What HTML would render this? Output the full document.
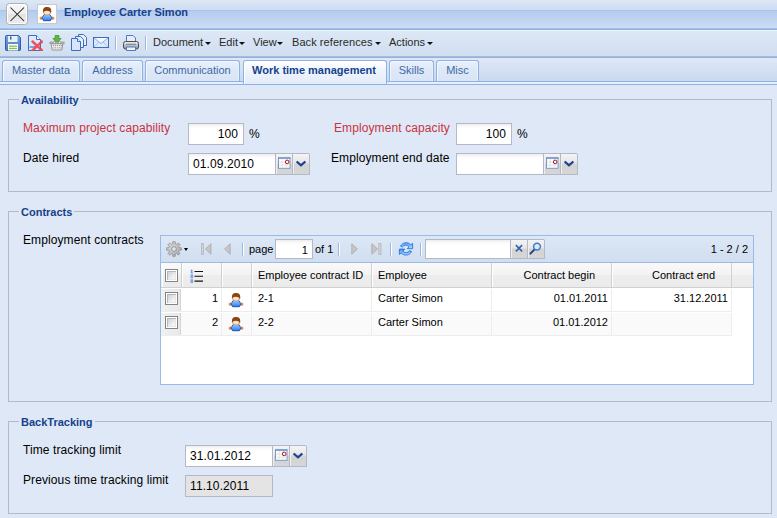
<!DOCTYPE html>
<html>
<head>
<meta charset="utf-8">
<title>Employee Carter Simon</title>
<style>
html,body{margin:0;padding:0;}
body{width:777px;height:518px;overflow:hidden;background:#dfe8f6;font-family:"Liberation Sans",Arial,sans-serif;font-size:11px;color:#000;position:relative;}
.abs{position:absolute;}
#top0{left:0;top:0;width:777px;height:10px;background:linear-gradient(#dde8f5,#cedcf2);}
#hdr{left:0;top:10px;width:777px;height:18px;background:linear-gradient(#b5ccee,#cbdbf3);border-top:1px solid #a9c4ec;box-sizing:border-box;}
#hdrline{left:0;top:28px;width:777px;height:2px;background:linear-gradient(#a3bfe9 50%,#8db2e3 50%);}
#hdrline2{left:0;top:30px;width:777px;height:1px;background:#eef4fc;}
#tb{left:0;top:31px;width:777px;height:25px;background:linear-gradient(#dde8f6,#d0def0);}
#tbline{left:0;top:56px;width:777px;height:2px;background:linear-gradient(#a9bbd0 50%,#8db2e3 50%);}
#tabs{left:0;top:58px;width:777px;height:23px;background:linear-gradient(#dfe8f6,#c9d9f0);}
#tabl1{left:0;top:81px;width:777px;height:1px;background:#8db2e3;}
#tabl2{left:0;top:82px;width:777px;height:2px;background:#e6effc;}
#tabl3{left:0;top:84px;width:777px;height:1px;background:#8db2e3;}
#closeb{left:6px;top:3px;width:20px;height:20px;border:1px solid #b0b0b0;border-radius:3.5px;background:linear-gradient(#f7f7f7 0%,#eeeeee 50%,#e3e3e3 50%,#ececec 100%);box-shadow:inset 0 0 0 1px #fff;}
#uicon{left:37px;top:4px;width:18px;height:18px;border:1px solid #c9c9c9;background:#fff;}
#title{left:64px;top:5px;font-weight:bold;font-size:11px;color:#15428b;line-height:14px;white-space:nowrap;}
.tbtxt{top:35px;font-size:11px;color:#2a2a2a;line-height:14px;white-space:nowrap;}
.arr{position:absolute;width:0;height:0;border-left:3px solid transparent;border-right:3px solid transparent;border-top:3px solid #111;}
.sep{position:absolute;width:1px;background:#98b8e2;border-right:1px solid #fff;}
.tab{position:absolute;top:60px;height:21px;border:1px solid #8db2e3;border-bottom:none;border-radius:3px 3px 0 0;background:linear-gradient(#e9f1fc 0%,#dde8f8 45%,#d9e5f6 100%);box-sizing:border-box;text-align:center;color:#416aa3;font-size:11px;line-height:19px;white-space:nowrap;box-shadow:inset 1px 1px 0 #f4f8fd, inset -1px 0 0 #eaf1fb;}
.tab.act{height:24px;background:linear-gradient(#ffffff 0%,#f0f5fd 40%,#e3ecfa 100%);color:#15428b;font-weight:bold;box-shadow:inset 1px 1px 0 #fff;}
.fs{position:absolute;border:1px solid #b5b8c8;box-sizing:border-box;}
.lg{position:absolute;top:-7px;left:10px;padding:0 2px;background:#dfe8f6;color:#15428b;font-weight:bold;font-size:11px;line-height:14px;white-space:nowrap;}
.lbl{position:absolute;font-size:12px;line-height:15px;white-space:nowrap;letter-spacing:0.1px;}
.red{color:#c8343e;}
.inp{position:absolute;box-sizing:border-box;border:1px solid #b5b8c8;background:#fff linear-gradient(#ececec 0,#f8f8f8 2px,#fff 5px);height:22px;font-size:12px;line-height:20px;padding:0 4px;white-space:nowrap;letter-spacing:0.1px;}
.inp.r{text-align:right;padding-right:5px;}
.inp.ro{background:#e4e4e4;box-shadow:none;border-color:#b5b8c8;}
.trg{position:absolute;box-sizing:border-box;width:17px;height:22px;border:1px solid #b5b8c8;border-left:none;background:linear-gradient(#f4f4f4 0%,#e6e6e6 45%,#d3d3d3 50%,#d6d6d6 100%);box-shadow:inset 1px 0 0 #efefef;}
.trg+.trg{width:17px;border-radius:0 2px 0 0;}
#grid{left:160px;top:235px;width:594px;height:150px;border:1px solid #99bbe8;background:#fff;box-sizing:border-box;}
#gtb{left:0;top:0;width:592px;height:26px;background:linear-gradient(#dde8f6,#d0def0);border-bottom:1px solid #99bbe8;}
#ghd{left:0;top:27px;width:592px;height:25px;background:linear-gradient(#f9f9f9 0%,#f3f3f3 48%,#ededed 52%,#ebebeb 100%);border-bottom:1px solid #d0d0d0;box-sizing:border-box;}
.hc{position:absolute;top:0;margin-left:1px;height:24px;box-sizing:border-box;border-right:1px solid #d0d0d0;border-left:1px solid #fff;font-size:11px;line-height:24px;padding:0 6px 0 5px;white-space:nowrap;color:#000;}
.row{position:absolute;left:0;width:571px;height:24px;box-sizing:border-box;border-bottom:1px solid #ededed;border-top:1px solid #fff;}
.row.alt{background:#fafafa;}
.c{position:absolute;top:-1px;height:22px;font-size:11px;line-height:21px;white-space:nowrap;box-sizing:border-box;padding:0 6px 0 7px;}
.vb{position:absolute;top:0;width:1px;height:22px;background:#ededed;}
.ckc{position:absolute;left:0;top:0;width:20px;height:22px;box-sizing:border-box;border-right:1px solid #d4d4d4;background:linear-gradient(90deg,#f1f1f1,#e8e8e8);}
.ck{position:absolute;width:11px;height:11px;border:1px solid #848484;background:#fff;}
.ck:after{content:"";position:absolute;left:1px;top:1px;width:9px;height:9px;background:linear-gradient(135deg,#cdd1d6 10%,#fdfdfd 90%);box-shadow:inset 1px 1px 0 #b4b8be, inset -1px -1px 0 #e6e6e6;}
</style>
</head>
<body>
<div class="abs" id="top0"></div>
<div class="abs" id="hdr"></div>
<div class="abs" id="hdrline"></div>
<div class="abs" id="hdrline2"></div>
<div class="abs" id="tb"></div>
<div class="abs" id="tbline"></div>
<div class="abs" id="tabs"></div>
<div class="abs" id="tabl1"></div>
<div class="abs" id="tabl2"></div>
<div class="abs" id="tabl3"></div>

<div class="abs" id="closeb"><svg width="20" height="20" viewBox="0 0 20 20"><path d="M3.5 3.5L17 17M17 3.5L3.5 17" stroke="#202020" stroke-width="1.05" fill="none"/></svg></div>
<div class="abs" id="uicon"></div>
<svg class="abs" style="left:39px;top:6px" width="16" height="16" viewBox="0 0 16 16">
<defs><linearGradient id="gub1" x1="0" y1="0" x2="0" y2="1"><stop offset="0" stop-color="#a9d6ff"/><stop offset="1" stop-color="#2a7df0"/></linearGradient></defs>
<ellipse cx="2" cy="12.2" rx="1" ry="1.3" fill="#f0a347" stroke="#d4761a" stroke-width="0.6"/><ellipse cx="14" cy="12.2" rx="1" ry="1.3" fill="#f0a347" stroke="#d4761a" stroke-width="0.6"/>
<path d="M6 7.6 L2.9 11.9 L4.6 14.7 H11.4 L13.1 11.9 L10 7.6 Z" fill="url(#gub1)" stroke="#1b43b4" stroke-width="0.9" stroke-linejoin="round"/>
<g transform="translate(0,0.5)"><circle cx="8" cy="4.9" r="3.7" fill="#fce3cf" stroke="#c98a55" stroke-width="0.8"/>
<path d="M4 5.8 Q3.5 1.2 7 0.6 Q11 0 12 2.4 Q12.6 5 12 7 Q11.6 4.6 9.4 4.5 Q6.2 3.4 4 5.8 Z" fill="#8a4513"/></g>
</svg>
<div class="abs" id="title">Employee Carter Simon</div>

<!-- toolbar -->
<div class="abs tbtxt" style="left:153px">Document</div><div class="arr" style="left:205px;top:42px"></div>
<div class="abs tbtxt" style="left:219px">Edit</div><div class="arr" style="left:239px;top:42px"></div>
<div class="abs tbtxt" style="left:253px">View</div><div class="arr" style="left:277px;top:42px"></div>
<div class="abs tbtxt" style="left:292px;letter-spacing:0.07px">Back references</div><div class="arr" style="left:375px;top:42px"></div>
<div class="abs tbtxt" style="left:389px">Actions</div><div class="arr" style="left:427px;top:42px"></div>
<div class="sep" style="left:115px;top:36px;height:14px"></div>
<div class="sep" style="left:145px;top:36px;height:14px"></div>


<!-- toolbar icons -->
<svg class="abs" style="left:5px;top:35px" width="16" height="16" viewBox="0 0 16 16">
<defs><linearGradient id="gsv" x1="0" y1="0" x2="0" y2="1"><stop offset="0" stop-color="#7ba3dc"/><stop offset="1" stop-color="#4a78c0"/></linearGradient></defs>
<path d="M0.5 1.5 Q0.5 0.5 1.5 0.5 H13.5 L15.5 2.5 V14.5 Q15.5 15.5 14.5 15.5 H1.5 Q0.5 15.5 0.5 14.5 Z" fill="url(#gsv)" stroke="#2f5fae"/>
<rect x="3" y="1" width="9.5" height="6" fill="#e8f0fb"/><rect x="5" y="1.5" width="1.5" height="3" fill="#3d5f94"/>
<rect x="3" y="9" width="10" height="6.5" fill="#fdfdfd"/><rect x="4" y="10.5" width="8" height="1.3" fill="#86c04a"/><rect x="4" y="12.8" width="8" height="1.3" fill="#86c04a"/>
</svg>
<svg class="abs" style="left:27px;top:35px" width="16" height="16" viewBox="0 0 16 16">
<path d="M1.5 0.5 H9.5 L13.5 4.5 V15.5 H1.5 Z" fill="#dbe9fb" stroke="#3a6fc0"/>
<path d="M9.5 0.5 V4.5 H13.5" fill="#fff" stroke="#3a6fc0"/>
<rect x="2.5" y="11" width="6" height="2" fill="#6ea6e6"/>
<path d="M5.5 6.5 L15 15.5 M15 6.5 L5.5 15.5" stroke="#f1434f" stroke-width="2.5" opacity="0.92" stroke-linecap="round" fill="none"/>
</svg>
<svg class="abs" style="left:49px;top:35px" width="16" height="16" viewBox="0 0 17 16" preserveAspectRatio="none">
<path d="M6.5 0.5 H10.5 V3.5 H12.8 L8.5 8 L4.2 3.5 H6.5 Z" fill="#5fb83a" stroke="#3f962a" stroke-width="0.8"/>
<path d="M0.8 7 H16.2 V8.6 H0.8 Z" fill="#b9b9b9" stroke="#8a8a8a" stroke-width="0.6"/>
<path d="M2.2 8.8 H14.8 L13.6 15 H3.4 Z" fill="#efefef" stroke="#8a8a8a" stroke-width="0.9"/>
<g fill="#8f8f8f"><rect x="4.3" y="10" width="1.1" height="1.1"/><rect x="6.5" y="10" width="1.1" height="1.1"/><rect x="8.7" y="10" width="1.1" height="1.1"/><rect x="10.9" y="10" width="1.1" height="1.1"/><rect x="12.6" y="10" width="1.1" height="1.1"/>
<rect x="4.6" y="12.3" width="1.1" height="1.1"/><rect x="6.5" y="12.3" width="1.1" height="1.1"/><rect x="8.7" y="12.3" width="1.1" height="1.1"/><rect x="10.9" y="12.3" width="1.1" height="1.1"/><rect x="12.3" y="12.3" width="1.1" height="1.1"/></g>
<circle cx="5.6" cy="7.4" r="1" fill="#fff" stroke="#777" stroke-width="0.5"/><circle cx="11.4" cy="7.4" r="1" fill="#fff" stroke="#777" stroke-width="0.5"/>
</svg>
<svg class="abs" style="left:71px;top:34px" width="17" height="17" viewBox="0 0 17 17">
<g stroke="#3a6fc0" fill="#e4eefc"><path d="M7.5 0.5 H12.5 L15.5 3.5 V11.5 H7.5 Z"/><path d="M4.5 2.5 H9.5 L12.5 5.5 V13.5 H4.5 Z"/><path d="M0.5 4.5 H6.5 L9.5 7.5 V16.5 H0.5 Z" fill="#d6e5fa"/><path d="M6.5 4.5 V7.5 H9.5" fill="#fff"/></g>
</svg>
<svg class="abs" style="left:93px;top:37px" width="16" height="11" viewBox="0 0 16 11">
<rect x="0.5" y="0.5" width="15" height="10" fill="#dce9fb" stroke="#3a6fc0"/>
<path d="M1 1 L8 6.5 L15 1" fill="#f4f8fe" stroke="#7ea6df" stroke-width="0.9"/><path d="M1 10 L6 5 M15 10 L10 5" stroke="#9cbbe8" stroke-width="0.8" fill="none"/>
</svg>
<svg class="abs" style="left:123px;top:35px" width="16" height="16" viewBox="0 0 16 16">
<defs><linearGradient id="gpr" x1="0" y1="0" x2="0" y2="1"><stop offset="0" stop-color="#f2f2f2"/><stop offset="0.55" stop-color="#bdbdbd"/><stop offset="1" stop-color="#8c8c8c"/></linearGradient></defs>
<path d="M3.5 0.5 H10 L12.5 3 V8 H3.5 Z" fill="#e6f0fc" stroke="#4a7cc8"/>
<rect x="0.5" y="6.5" width="15" height="7.5" rx="2" fill="url(#gpr)" stroke="#4d4d4d"/>
<rect x="3" y="8.8" width="10" height="1.2" fill="#8e8e8e"/>
<path d="M3.5 12 H12.5 V15.5 H3.5 Z" fill="#eef4fd" stroke="#4a7cc8"/>
</svg>

<!-- tabs -->
<div class="tab" style="left:2px;width:78px">Master data</div>
<div class="tab" style="left:82px;width:61px">Address</div>
<div class="tab" style="left:145px;width:95px">Communication</div>
<div class="tab act" style="left:243px;width:144px;text-indent:-2px">Work time management</div>
<div class="tab" style="left:389px;width:45px">Skills</div>
<div class="tab" style="left:436px;width:43px">Misc</div>

<!-- Availability -->
<div class="fs" style="left:8px;top:99px;width:764px;height:93px"><div class="lg">Availability</div></div>
<div class="lbl red" style="left:23px;top:121px">Maximum project capability</div>
<div class="inp r" style="left:188px;top:123px;width:56px">100</div>
<div class="lbl" style="left:249px;top:127px">%</div>
<div class="lbl red" style="left:334px;top:121px">Employment capacity</div>
<div class="inp r" style="left:456px;top:123px;width:56px">100</div>
<div class="lbl" style="left:517px;top:127px">%</div>
<div class="lbl" style="left:23px;top:151px">Date hired</div>
<div class="inp" style="left:188px;top:153px;width:88px">01.09.2010</div>
<div class="trg" style="left:276px;top:153px"><svg style="position:absolute;left:2px;top:3px" width="13" height="13" viewBox="0 0 13 13"><rect x="0.5" y="1" width="11.5" height="10.3" fill="#fdfdfd" stroke="#7a9bcb"/><rect x="0" y="0.3" width="12.5" height="1.4" fill="#6e93c9"/><path d="M4.2 2 V10.8 M8 2 V10.8 M1 5.2 H11.5 M1 8.2 H11.5" stroke="#e3e3e3" stroke-width="1" fill="none"/><circle cx="9.2" cy="4.9" r="1.8" fill="#fff" stroke="#a40010" stroke-width="0.95"/></svg></div><div class="trg" style="left:293px;top:153px"><svg style="position:absolute;left:2px;top:6px" width="12" height="7" viewBox="0 0 12 7"><path d="M1.6 1.5 L6 5.3 L10.4 1.5" fill="none" stroke="#1c3f94" stroke-width="2.3" stroke-linejoin="miter"/></svg></div>
<div class="lbl" style="left:331px;top:151px">Employment end date</div>
<div class="inp" style="left:456px;top:153px;width:88px"></div>
<div class="trg" style="left:544px;top:153px"><svg style="position:absolute;left:2px;top:3px" width="13" height="13" viewBox="0 0 13 13"><rect x="0.5" y="1" width="11.5" height="10.3" fill="#fdfdfd" stroke="#7a9bcb"/><rect x="0" y="0.3" width="12.5" height="1.4" fill="#6e93c9"/><path d="M4.2 2 V10.8 M8 2 V10.8 M1 5.2 H11.5 M1 8.2 H11.5" stroke="#e3e3e3" stroke-width="1" fill="none"/><circle cx="9.2" cy="4.9" r="1.8" fill="#fff" stroke="#a40010" stroke-width="0.95"/></svg></div><div class="trg" style="left:561px;top:153px"><svg style="position:absolute;left:2px;top:6px" width="12" height="7" viewBox="0 0 12 7"><path d="M1.6 1.5 L6 5.3 L10.4 1.5" fill="none" stroke="#1c3f94" stroke-width="2.3" stroke-linejoin="miter"/></svg></div>

<!-- Contracts -->
<div class="fs" style="left:8px;top:211px;width:764px;height:191px"><div class="lg">Contracts</div></div>
<div class="lbl" style="left:23px;top:233px">Employment contracts</div>
<div class="abs" id="grid">
  <div class="abs" id="gtb">
    
    <svg style="position:absolute;left:5px;top:5px" width="16" height="16" viewBox="0 0 16 16"><defs><linearGradient id="ggr" x1="0" y1="0" x2="1" y2="1"><stop offset="0" stop-color="#e2e2e2"/><stop offset="1" stop-color="#a4a4a4"/></linearGradient></defs><path d="M13.14 6.72 L15.30 6.79 L15.30 9.21 L13.14 9.28 L12.54 10.73 L14.02 12.30 L12.30 14.02 L10.73 12.54 L9.28 13.14 L9.21 15.30 L6.79 15.30 L6.72 13.14 L5.27 12.54 L3.70 14.02 L1.98 12.30 L3.46 10.73 L2.86 9.28 L0.70 9.21 L0.70 6.79 L2.86 6.72 L3.46 5.27 L1.98 3.70 L3.70 1.98 L5.27 3.46 L6.72 2.86 L6.79 0.70 L9.21 0.70 L9.28 2.86 L10.73 3.46 L12.30 1.98 L14.02 3.70 L12.54 5.27 Z" fill="url(#ggr)" stroke="#8c8c8c" stroke-width="0.8" stroke-linejoin="round"/><circle cx="8" cy="8" r="2.3" fill="#dbe7f6" stroke="#8c8c8c" stroke-width="0.8"/></svg>
    <div class="arr" style="left:23px;top:12px;border-top-color:#000;border-left-width:2.5px;border-right-width:2.5px"></div>
    <svg style="position:absolute;left:40px;top:7px" width="11" height="12" viewBox="0 0 11 12"><rect x="0.5" y="0.5" width="2" height="11" fill="#d4d4d4" stroke="#b0b0b0" stroke-width="0.7"/><path d="M10 0.8 V11.2 L4.4 6 Z" fill="#c6c6c6" stroke="#a2a2a2" stroke-width="0.7"/></svg>
    <svg style="position:absolute;left:63px;top:7px" width="7" height="12" viewBox="0 0 7 12"><path d="M6.2 0.8 V11.2 L0.6 6 Z" fill="#c6c6c6" stroke="#a2a2a2" stroke-width="0.7"/></svg>
    <div class="sep" style="left:81px;top:7px;height:13px"></div>
    <div class="sep" style="left:177px;top:7px;height:13px"></div>
    <svg style="position:absolute;left:190px;top:7px" width="7" height="12" viewBox="0 0 7 12"><path d="M0.8 0.8 V11.2 L6.4 6 Z" fill="#c6c6c6" stroke="#a2a2a2" stroke-width="0.7"/></svg>
    <svg style="position:absolute;left:210px;top:7px" width="11" height="12" viewBox="0 0 11 12"><rect x="7.8" y="0.5" width="2.2" height="11" fill="#d4d4d4" stroke="#b0b0b0" stroke-width="0.7"/><path d="M0.8 0.8 V11.2 L6.6 6 Z" fill="#c6c6c6" stroke="#a2a2a2" stroke-width="0.7"/></svg>
    <div class="sep" style="left:229px;top:7px;height:13px"></div>
    <svg style="position:absolute;left:237px;top:5px" width="16" height="16" viewBox="0 0 16 16"><defs><linearGradient id="grf" x1="0" y1="0" x2="0" y2="1"><stop offset="0" stop-color="#5aa6f2"/><stop offset="1" stop-color="#b9dcff"/></linearGradient><linearGradient id="grf2" x1="0" y1="0" x2="0" y2="1"><stop offset="0" stop-color="#b9dcff"/><stop offset="1" stop-color="#3f8fe8"/></linearGradient></defs><path id="rfa" d="M2.5 5.2 A6.3 6.3 0 0 1 12.8 3.8 L14.6 2.4 V7.7 H9.3 L11.1 5.6 A4.1 4.1 0 0 0 4.5 6 Z" fill="url(#grf)" stroke="#2173e2" stroke-width="0.9" stroke-linejoin="round"/><path d="M2.5 5.2 A6.3 6.3 0 0 1 12.8 3.8 L14.6 2.4 V7.7 H9.3 L11.1 5.6 A4.1 4.1 0 0 0 4.5 6 Z" transform="rotate(180 8 7.9)" fill="url(#grf2)" stroke="#2173e2" stroke-width="0.9" stroke-linejoin="round"/></svg>
    <div class="sep" style="left:259px;top:7px;height:13px"></div>
    <div class="abs" style="left:88px;top:6px;font-size:11px;line-height:14px">page</div>
    <div class="inp r" style="left:114px;top:3px;width:38px;height:20px;font-size:11px;line-height:20px;padding:0 4px 0 3px">1</div>
    <div class="abs" style="left:154px;top:6px;font-size:11px;line-height:14px">of 1</div>
    <div class="inp" style="left:264px;top:3px;width:86px;height:20px"></div>
    <div class="trg" style="left:350px;top:3px;height:20px"><svg style="position:absolute;left:4px;top:4px" width="9" height="9" viewBox="0 0 9 9"><path d="M0.9 1.1 L7.1 7.4 M7.1 1.1 L0.9 7.4" stroke="#2d62ae" stroke-width="1.5" fill="none"/></svg></div><div class="trg" style="left:367px;top:3px;height:20px"><svg style="position:absolute;left:0px;top:1px" width="15" height="15" viewBox="0 0 15 15"><path d="M6.6 8.4 L2.4 12.6" stroke="#1f4286" stroke-width="2" stroke-linecap="round"/><circle cx="9" cy="5.6" r="3.4" fill="#dbe9fa" stroke="#3b7bd0" stroke-width="1.5"/></svg></div>
    <div class="abs" style="right:5px;top:6px;font-size:11px;line-height:14px">1 - 2 / 2</div>
  </div>
  <div class="abs" id="ghd">
    <div class="hc" style="left:0;width:20px"></div>
    <div class="hc" style="left:20px;width:40px"></div><svg style="position:absolute;left:29px;top:6px" width="14" height="14" viewBox="0 0 14 14"><g fill="#5a8fe0"><rect x="1.2" y="0.6" width="1.2" height="3.6"/><rect x="0.4" y="1.2" width="1" height="0.9" opacity="0.7"/><rect x="0.4" y="3.6" width="2.8" height="0.8" opacity="0.6"/><rect x="0.5" y="5.4" width="2.6" height="3.8" opacity="0.75"/><rect x="0.5" y="10.2" width="2.6" height="3.8" opacity="0.75"/></g><path d="M4.5 2.5 H13 M4.5 7.3 H13 M4.5 12.1 H13" stroke="#111" stroke-width="1.1"/></svg>
    <div class="hc" style="left:60px;width:30px"></div>
    <div class="hc" style="left:90px;width:120px">Employee contract ID</div>
    <div class="hc" style="left:210px;width:120px">Employee</div>
    <div class="hc" style="left:330px;width:120px;text-align:right;padding-right:16px">Contract begin</div>
    <div class="hc" style="left:450px;width:120px;text-align:right;padding-right:16px">Contract end</div>
    <div class="ck" style="left:4px;top:6px"></div>
  </div>
  <div class="row" style="top:52px"><div class="ckc"></div><div class="vb" style="left:60px"></div><div class="vb" style="left:90px"></div><div class="vb" style="left:210px"></div><div class="vb" style="left:330px"></div><div class="vb" style="left:450px"></div><div class="vb" style="left:570px"></div>
    <div class="ck" style="left:4px;top:3px"></div>
    <div class="c" style="left:20px;width:40px;text-align:right;padding-right:3px">1</div>
    <svg style="position:absolute;left:67px;top:3px" width="16" height="16" viewBox="0 0 16 16">
<defs><linearGradient id="gub2" x1="0" y1="0" x2="0" y2="1"><stop offset="0" stop-color="#a9d6ff"/><stop offset="1" stop-color="#2a7df0"/></linearGradient></defs>
<ellipse cx="2" cy="12.2" rx="1" ry="1.3" fill="#f0a347" stroke="#d4761a" stroke-width="0.6"/><ellipse cx="14" cy="12.2" rx="1" ry="1.3" fill="#f0a347" stroke="#d4761a" stroke-width="0.6"/>
<path d="M6 7.6 L2.9 11.9 L4.6 14.7 H11.4 L13.1 11.9 L10 7.6 Z" fill="url(#gub2)" stroke="#1b43b4" stroke-width="0.9" stroke-linejoin="round"/>
<g transform="translate(0,0.5)"><circle cx="8" cy="4.9" r="3.7" fill="#fce3cf" stroke="#c98a55" stroke-width="0.8"/>
<path d="M4 5.8 Q3.5 1.2 7 0.6 Q11 0 12 2.4 Q12.6 5 12 7 Q11.6 4.6 9.4 4.5 Q6.2 3.4 4 5.8 Z" fill="#8a4513"/></g>
</svg>
<div class="c" style="left:90px">2-1</div>
    <div class="c" style="left:210px">Carter Simon</div>
    <div class="c" style="left:330px;width:120px;text-align:right;padding-right:3px">01.01.2011</div>
    <div class="c" style="left:450px;width:120px;text-align:right;padding-right:3px">31.12.2011</div>
  </div>
  <div class="row alt" style="top:76px"><div class="ckc"></div><div class="vb" style="left:60px"></div><div class="vb" style="left:90px"></div><div class="vb" style="left:210px"></div><div class="vb" style="left:330px"></div><div class="vb" style="left:450px"></div><div class="vb" style="left:570px"></div>
    <div class="ck" style="left:4px;top:3px"></div>
    <div class="c" style="left:20px;width:40px;text-align:right;padding-right:3px">2</div>
    <svg style="position:absolute;left:67px;top:3px" width="16" height="16" viewBox="0 0 16 16">
<defs><linearGradient id="gub3" x1="0" y1="0" x2="0" y2="1"><stop offset="0" stop-color="#a9d6ff"/><stop offset="1" stop-color="#2a7df0"/></linearGradient></defs>
<ellipse cx="2" cy="12.2" rx="1" ry="1.3" fill="#f0a347" stroke="#d4761a" stroke-width="0.6"/><ellipse cx="14" cy="12.2" rx="1" ry="1.3" fill="#f0a347" stroke="#d4761a" stroke-width="0.6"/>
<path d="M6 7.6 L2.9 11.9 L4.6 14.7 H11.4 L13.1 11.9 L10 7.6 Z" fill="url(#gub3)" stroke="#1b43b4" stroke-width="0.9" stroke-linejoin="round"/>
<g transform="translate(0,0.5)"><circle cx="8" cy="4.9" r="3.7" fill="#fce3cf" stroke="#c98a55" stroke-width="0.8"/>
<path d="M4 5.8 Q3.5 1.2 7 0.6 Q11 0 12 2.4 Q12.6 5 12 7 Q11.6 4.6 9.4 4.5 Q6.2 3.4 4 5.8 Z" fill="#8a4513"/></g>
</svg>
<div class="c" style="left:90px">2-2</div>
    <div class="c" style="left:210px">Carter Simon</div>
    <div class="c" style="left:330px;width:120px;text-align:right;padding-right:3px">01.01.2012</div>
  </div>
</div>

<!-- BackTracking -->
<div class="fs" style="left:8px;top:421px;width:764px;height:93px"><div class="lg">BackTracking</div></div>
<div class="lbl" style="left:23px;top:443px">Time tracking limit</div>
<div class="inp" style="left:185px;top:445px;width:88px">31.01.2012</div>
<div class="trg" style="left:273px;top:445px"><svg style="position:absolute;left:2px;top:3px" width="13" height="13" viewBox="0 0 13 13"><rect x="0.5" y="1" width="11.5" height="10.3" fill="#fdfdfd" stroke="#7a9bcb"/><rect x="0" y="0.3" width="12.5" height="1.4" fill="#6e93c9"/><path d="M4.2 2 V10.8 M8 2 V10.8 M1 5.2 H11.5 M1 8.2 H11.5" stroke="#e3e3e3" stroke-width="1" fill="none"/><circle cx="9.2" cy="4.9" r="1.8" fill="#fff" stroke="#a40010" stroke-width="0.95"/></svg></div><div class="trg" style="left:290px;top:445px"><svg style="position:absolute;left:2px;top:6px" width="12" height="7" viewBox="0 0 12 7"><path d="M1.6 1.5 L6 5.3 L10.4 1.5" fill="none" stroke="#1c3f94" stroke-width="2.3" stroke-linejoin="miter"/></svg></div>
<div class="lbl" style="left:23px;top:473px">Previous time tracking limit</div>
<div class="inp ro" style="left:185px;top:475px;width:88px">11.10.2011</div>
</body>
</html>
